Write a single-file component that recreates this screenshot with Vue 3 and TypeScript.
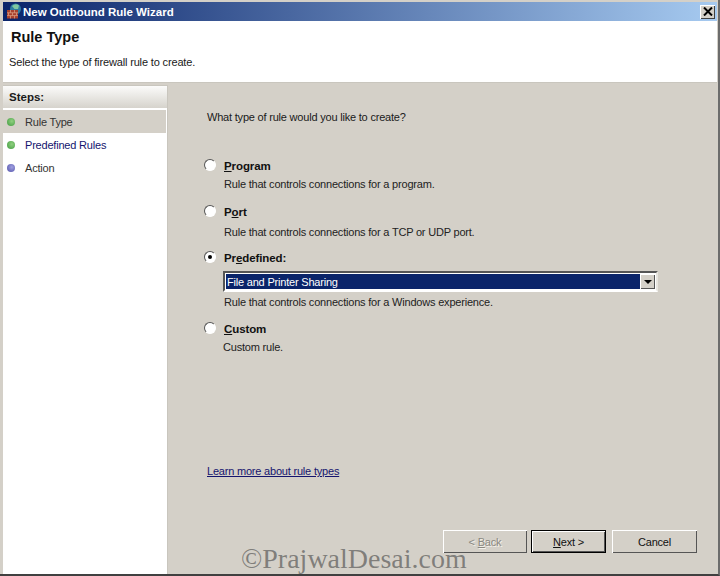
<script setup lang="ts">
interface Step { label: string; color: string; active?: boolean; link?: boolean }
const steps: Step[] = [
  { label: 'Rule Type', color: 'green', active: true },
  { label: 'Predefined Rules', color: 'green', link: true },
  { label: 'Action', color: 'blue' },
]
</script>

<template>
  <div class="window">
    <div class="titlebar">
      <svg class="app-icon" width="16" height="16" viewBox="0 0 16 16">
        <circle cx="9.5" cy="6" r="5.5" fill="#2f7f9f" />
        <path d="M6 3 Q9.5 0 13 2.5 L12 6 L8.5 6 Z" fill="#7fc8a0" />
        <path d="M1 7 H12 V15.5 H1 Z" fill="#a8402c" />
        <path d="M1 9.8 H12 M1 12.6 H12 M4.5 7 V9.8 M8.5 7 V9.8 M2.5 9.8 V12.6 M6.5 9.8 V12.6 M10.5 9.8 V12.6 M4.5 12.6 V15.5 M8.5 12.6 V15.5" stroke="#d89a80" stroke-width="0.8" fill="none" />
      </svg>
      <span class="title-text">New Outbound Rule Wizard</span>
      <span class="close-btn">
        <svg width="10" height="9" viewBox="0 0 10 9"><path d="M1 0.5 L9 8.5 M9 0.5 L1 8.5" stroke="#000" stroke-width="2" /></svg>
      </span>
    </div>

    <header class="head">
      <h1>Rule Type</h1>
      <p>Select the type of firewall rule to create.</p>
    </header>

    <div class="body">
      <aside class="steps">
        <div class="steps-head">Steps:</div>
        <ul>
          <li v-for="s in steps" :key="s.label" :class="{ active: s.active, link: s.link }">
            <span class="dot" :class="s.color"></span>{{ s.label }}
          </li>
        </ul>
      </aside>

      <main class="panel">
        <p class="question">What type of rule would you like to create?</p>

        <div class="option first">
          <div class="opt-row"><span class="radio"></span><b><u>P</u>rogram</b></div>
          <div class="desc desc-prog">Rule that controls connections for a program.</div>
        </div>
        <div class="option second">
          <div class="opt-row"><span class="radio"></span><b>P<u>o</u>rt</b></div>
          <div class="desc desc-port">Rule that controls connections for a TCP or UDP port.</div>
        </div>
        <div class="option third">
          <div class="opt-row"><span class="radio checked"></span><b>Pr<u>e</u>defined:</b></div>
          <div class="combo">
            <span class="combo-value">File and Printer Sharing</span>
            <span class="combo-arrow"><i></i></span>
          </div>
          <div class="desc desc-win">Rule that controls connections for a Windows experience.</div>
        </div>
        <div class="option fourth">
          <div class="opt-row"><span class="radio"></span><b><u>C</u>ustom</b></div>
          <div class="desc desc-custom">Custom rule.</div>
        </div>

        <a class="learn">Learn more about rule types</a>

        <div class="buttons">
          <button class="btn back" disabled>&lt; <u>B</u>ack</button>
          <button class="btn next"><u>N</u>ext &gt;</button>
          <button class="btn cancel">Cancel</button>
        </div>
      </main>
    </div>

    <div class="watermark">©PrajwalDesai.com</div>
  </div>
</template>

<style>
html, body { margin: 0; background: #d4d0c8; }
</style>

<style scoped>
.window {
  position: relative;
  width: 720px;
  height: 576px;
  box-sizing: border-box;
  background: #d4d0c8;
  border-bottom: 2px solid #404040;
  border-right: 2px solid #6c6c6c;
  padding: 2px 1px 0 3px;
  display: flex;
  flex-direction: column;
  overflow: hidden;
  font-family: "Liberation Sans", Arial, sans-serif;
  font-size: 11px;
  letter-spacing: -0.2px;
  color: #1a1a1a;
}
.titlebar {
  height: 19px;
  flex: none;
  background: linear-gradient(90deg, #0a246a 0%, #a6caf0 100%);
  display: flex;
  align-items: center;
  padding: 0 2px 0 3px;
  color: #fff;
  font-weight: bold;
  font-size: 11.5px;
  letter-spacing: 0;
}
.app-icon { margin-right: 1px; margin-top: -1px; }
.title-text { flex: 1; }
.close-btn {
  width: 15px;
  height: 14px;
  background: #d4d0c8;
  box-shadow: inset 1px 1px 0 #fff, inset -1px -1px 0 #404040;
  display: flex;
  align-items: center;
  justify-content: center;
}
.head {
  height: 62px;
  flex: none;
  box-sizing: border-box;
  background: #fff;
  border-bottom: 1px solid #c9c6be;
  padding: 8px 0 0 8px;
  margin-bottom: 2px;
}
.head h1 { margin: 0; font-size: 14.5px; line-height: 16px; font-weight: bold; color: #111; letter-spacing: 0; }
.head p { margin: 10px 0 0 -2px; font-size: 11px; letter-spacing: -0.15px; line-height: 14px; }
.body { flex: 1; display: flex; min-height: 0; }
.steps {
  width: 164px;
  flex: none;
  background: #fff;
  border-right: 1px solid #c9c6be;
  margin-right: 2px;
}
.steps-head {
  height: 23px;
  box-sizing: border-box;
  padding: 5px 0 0 6px;
  font-weight: bold;
  font-size: 11.5px;
  letter-spacing: 0;
  background: linear-gradient(180deg, #fbfbfa 0%, #d6d3cc 100%);
  border-top: 1px solid #c9c6be;
}
.steps ul { list-style: none; margin: 2px 1px 0 0; padding: 0; }
.steps li {
  height: 23px;
  display: flex;
  align-items: center;
  color: #333;
}
.steps li.active { background: #d4d0c8; }
.steps li.link { color: #14146e; }
.dot {
  width: 8px;
  height: 8px;
  border-radius: 50%;
  margin: 0 10px 0 4px;
}
.dot.green { background: radial-gradient(circle at 60% 40%, #90d080, #3f9a3f); }
.dot.blue { background: radial-gradient(circle at 60% 40%, #a0a0e0, #5050a8); }
.panel {
  flex: 1;
  min-width: 0;
  padding: 0 0 0 37px;
  position: relative;
  display: flex;
  flex-direction: column;
}
.question { margin: 24px 0 0; line-height: 16px; }
.option { margin-left: -3px; }
.option.first { margin-top: 32px; }
.option.second { margin-top: 11px; }
.option.third { margin-top: 9px; }
.option.fourth { margin-top: 10px; }
.opt-row { display: flex; align-items: center; height: 17px; }
.opt-row b { font-weight: bold; font-size: 11.5px; letter-spacing: -0.1px; color: #111; }
.radio {
  width: 10px;
  height: 10px;
  border-radius: 50%;
  background: #fff;
  border: 1px solid #555;
  border-right-color: #fff;
  border-bottom-color: #fff;
  margin: -1px 8px 0 0;
  position: relative;
  flex: none;
}
.radio.checked::after {
  content: "";
  position: absolute;
  left: 3px;
  top: 3px;
  width: 4px;
  height: 4px;
  border-radius: 50%;
  background: #000;
}
.desc { margin-left: 20px; line-height: 16px; color: #222; }
.desc-prog { margin-top: 2px; }
.desc-port { margin-top: 4px; }
.desc-win { margin-top: 2px; }
.desc-custom { margin-top: 2px; margin-left: 19px; }
.combo {
  margin: 5px 0 0 19px;
  width: 435px;
  height: 21px;
  box-sizing: border-box;
  border: 2px solid;
  border-color: #555 #e8e6e0 #fff #555;
  background: #fff;
  display: flex;
  padding: 1px;
}
.combo-value {
  flex: 1;
  background: #0a246a;
  color: #fff;
  line-height: 17px;
  padding-left: 1px;
}
.combo-arrow {
  width: 15px;
  background: #d4d0c8;
  box-shadow: inset 1px 1px 0 #fff, inset -1px -1px 0 #555;
  display: flex;
  align-items: center;
  justify-content: center;
}
.combo-arrow i {
  border-left: 4px solid transparent;
  border-right: 4px solid transparent;
  border-top: 4px solid #000;
}
.learn {
  margin-top: 108px;
  color: #14146e;
  text-decoration: underline;
  line-height: 16px;
  align-self: flex-start;
}
.buttons {
  display: flex;
  margin-top: 51px;
  margin-left: 236px;
}
.btn {
  height: 23px;
  box-sizing: border-box;
  padding: 0;
  background: #d4d0c8;
  border: none;
  box-shadow: inset 1px 1px 0 #fff, inset -1px -1px 0 #555;
  font: inherit;
  letter-spacing: inherit;
  color: #111;
}
.back { width: 84px; color: #8a8880; text-shadow: 1px 1px 0 #f4f2ec; margin-right: 4px; }
.next { width: 75px; margin-right: 6px; outline: 1px solid #000; outline-offset: -1px; box-shadow: inset 2px 2px 0 #fff, inset -2px -2px 0 #555; }
.cancel { width: 85px; }
.watermark {
  position: absolute;
  left: 241px;
  top: 543px;
  font-family: "Liberation Serif", serif;
  font-size: 28px;
  line-height: 32px;
  letter-spacing: 0;
  color: rgba(90, 90, 88, 0.7);
  white-space: nowrap;
}
</style>
